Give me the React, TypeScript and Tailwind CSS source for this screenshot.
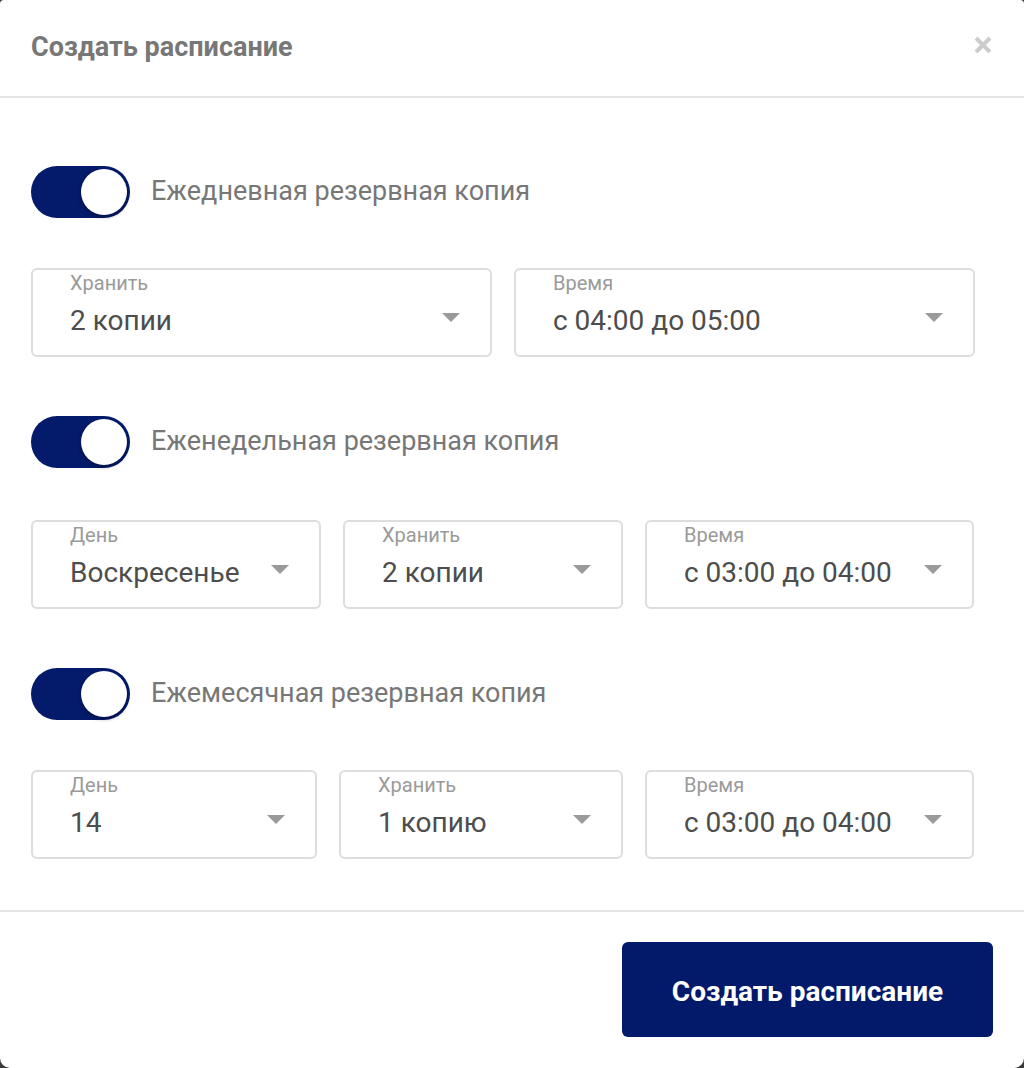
import React from "react";

function Toggle({ label }: { label: string }) {
  return (
    <div className="flex items-center h-[52px]">
      <div className="relative w-[99px] h-[52px] rounded-full bg-[#041a6b] shrink-0">
        <div className="absolute right-[3px] top-[3px] w-[46px] h-[46px] rounded-full bg-white shadow-[0_2px_4px_rgba(0,0,0,0.35)]" />
      </div>
      <span className="ml-[21px] mb-[3px] text-[27px] leading-[32px] text-[#777777]">{label}</span>
    </div>
  );
}

function Select({ label, value, w }: { label: string; value: string; w: string }) {
  return (
    <div className={`${w} h-[89px] border-2 border-[#dddddd] rounded-[6px] pl-[37px] pr-[30px] pt-[1px] flex flex-col shrink-0`}>
      <div className="text-[20px] leading-[24px] text-[#9a9a9a]">{label}</div>
      <div className="mt-[10px] flex items-center justify-between">
        <span className="text-[28px] leading-[32px] text-[#4d4d4d]">{value}</span>
        <svg width="18" height="10" viewBox="0 0 18 10" className="mb-[6px]">
          <path d="M0 0 L18 0 L9 9 Z" fill="#9a9a9a" />
        </svg>
      </div>
    </div>
  );
}

export default function App() {
  return (
    <div className="w-[1024px] h-[1068px] bg-[#3a3a3a]" style={{ fontFamily: "Roboto, 'Noto Sans', sans-serif" }}>
      <div className="w-full h-full bg-white rounded-t-[4px] rounded-b-[10px] flex flex-col">
        <div className="h-[98px] flex items-center justify-between pl-[31px] pr-[30px] border-b-2 border-[#e6e6e6] shrink-0">
          <h1 className="text-[27px] font-bold text-[#777777] leading-[32px] mb-[2px]">Создать расписание</h1>
          <svg width="20" height="20" viewBox="0 0 20 20" className="mb-[6px] mr-[1px]">
            <path d="M3 3 L17 17 M17 3 L3 17" stroke="#cccccc" strokeWidth="4" strokeLinecap="butt" />
          </svg>
        </div>
        <div className="pl-[31px] pr-[51px] pt-[68px] pb-[51px] flex flex-col border-b-2 border-[#e6e6e6]">
          <Toggle label="Ежедневная резервная копия" />
          <div className="mt-[50px] flex gap-[22px]">
            <Select w="w-[461px]" label="Хранить" value="2 копии" />
            <Select w="w-[461px]" label="Время" value="с 04:00 до 05:00" />
          </div>
          <div className="mt-[59px]">
            <Toggle label="Еженедельная резервная копия" />
          </div>
          <div className="mt-[52px] flex gap-[22px]">
            <Select w="w-[290px]" label="День" value="Воскресенье" />
            <Select w="w-[280px]" label="Хранить" value="2 копии" />
            <Select w="w-[329px]" label="Время" value="с 03:00 до 04:00" />
          </div>
          <div className="mt-[59px]">
            <Toggle label="Ежемесячная резервная копия" />
          </div>
          <div className="mt-[50px] flex gap-[22px]">
            <Select w="w-[286px]" label="День" value="14" />
            <Select w="w-[284px]" label="Хранить" value="1 копию" />
            <Select w="w-[329px]" label="Время" value="с 03:00 до 04:00" />
          </div>
        </div>
        <div className="flex justify-end pr-[31px] pt-[30px]">
          <button className="w-[371px] h-[95px] pt-[5px] rounded-[6px] bg-[#031a6b] text-white text-[28px] font-bold">
            Создать расписание
          </button>
        </div>
      </div>
    </div>
  );
}
